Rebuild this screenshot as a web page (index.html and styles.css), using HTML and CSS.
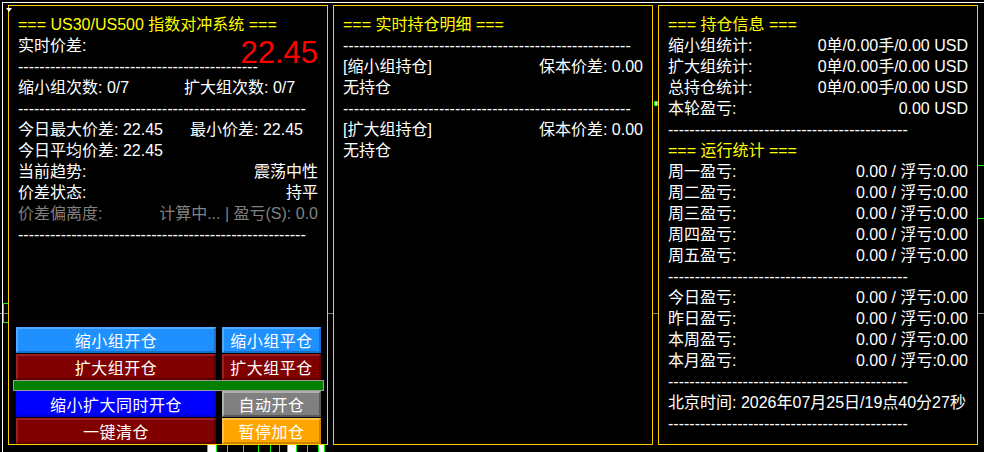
FILE: index.html
```html
<!DOCTYPE html>
<html lang="zh">
<head>
<meta charset="utf-8">
<title>US30/US500 指数对冲系统</title>
<link rel="stylesheet" href="styles.css">
</head>
<body>
<div class="chart">
  <div class="grid-line"></div>
  <div class="mark m-left"></div>
  <div class="mark m-gap"></div>
  <div class="mark m-right1"></div>
  <div class="mark m-right2"></div>
  <div class="candle c-w" style="left:207px"></div>
  <div class="candle c-g" style="left:227px"></div>
  <div class="candle c-g" style="left:243px"></div>
  <div class="candle c-g" style="left:258px"></div>
  <div class="candle c-g" style="left:270px"></div>
  <div class="candle c-g" style="left:279px"></div>
  <div class="candle c-w" style="left:287px"></div>
  <div class="candle c-g" style="left:307px"></div>
  <div class="candle c-w small" style="left:318px"></div>
  <div class="corner-tri"></div>
  <div class="frame">
    <section class="panel">
      <div class="info">
        <div class="title">=== US30/US500 指数对冲系统 ===</div>
        <div class="row split"><span>实时价差:</span><span class="big">22.45</span></div>
        <div class="dash">---------------------------------------------</div>
        <div class="row"><span class="col-a">缩小组次数: 0/7</span><span>扩大组次数: 0/7</span></div>
        <div class="dash">------------------------------------------------------</div>
        <div class="row"><span class="col-b">今日最大价差: 22.45</span><span>最小价差: 22.45</span></div>
        <div class="row">今日平均价差: 22.45</div>
        <div class="row split"><span>当前趋势:</span><span>震荡中性</span></div>
        <div class="row split"><span>价差状态:</span><span>持平</span></div>
        <div class="row split muted"><span>价差偏离度:</span><span>计算中... | 盈亏(S): 0.0</span></div>
        <div class="dash">------------------------------------------------------</div>
      </div>
      <div class="controls">
        <div class="btn-row gap-after">
          <div class="btn w1 b-dodger">缩小组开仓</div>
          <div class="btn w2 b-dodger">缩小组平仓</div>
        </div>
        <div class="btn-row">
          <div class="btn w1 b-maroon">扩大组开仓</div>
          <div class="btn w2 b-maroon">扩大组平仓</div>
        </div>
        <div class="progress"></div>
        <div class="btn-row gap-after">
          <div class="btn w1 b-blue">缩小扩大同时开仓</div>
          <div class="btn w2 b-gray">自动开仓</div>
        </div>
        <div class="btn-row">
          <div class="btn w1 b-maroon">一键清仓</div>
          <div class="btn w2 b-orange">暂停加仓</div>
        </div>
      </div>
    </section>

    <section class="panel">
      <div class="info">
        <div class="title">=== 实时持仓明细 ===</div>
        <div class="dash">------------------------------------------------------</div>
        <div class="row split"><span>[缩小组持仓]</span><span>保本价差: 0.00</span></div>
        <div class="row">无持仓</div>
        <div class="dash">------------------------------------------------------</div>
        <div class="row split"><span>[扩大组持仓]</span><span>保本价差: 0.00</span></div>
        <div class="row">无持仓</div>
      </div>
    </section>

    <section class="panel">
      <div class="info">
        <div class="title">=== 持仓信息 ===</div>
        <div class="row split"><span>缩小组统计:</span><span>0单/0.00手/0.00 USD</span></div>
        <div class="row split"><span>扩大组统计:</span><span>0单/0.00手/0.00 USD</span></div>
        <div class="row split"><span>总持仓统计:</span><span>0单/0.00手/0.00 USD</span></div>
        <div class="row split"><span>本轮盈亏:</span><span>0.00 USD</span></div>
        <div class="dash">---------------------------------------------</div>
        <div class="title">=== 运行统计 ===</div>
        <div class="row split"><span>周一盈亏:</span><span>0.00 / 浮亏:0.00</span></div>
        <div class="row split"><span>周二盈亏:</span><span>0.00 / 浮亏:0.00</span></div>
        <div class="row split"><span>周三盈亏:</span><span>0.00 / 浮亏:0.00</span></div>
        <div class="row split"><span>周四盈亏:</span><span>0.00 / 浮亏:0.00</span></div>
        <div class="row split"><span>周五盈亏:</span><span>0.00 / 浮亏:0.00</span></div>
        <div class="dash">---------------------------------------------</div>
        <div class="row split"><span>今日盈亏:</span><span>0.00 / 浮亏:0.00</span></div>
        <div class="row split"><span>昨日盈亏:</span><span>0.00 / 浮亏:0.00</span></div>
        <div class="row split"><span>本周盈亏:</span><span>0.00 / 浮亏:0.00</span></div>
        <div class="row split"><span>本月盈亏:</span><span>0.00 / 浮亏:0.00</span></div>
        <div class="dash">---------------------------------------------</div>
        <div class="row">北京时间: 2026年07月25日/19点40分27秒</div>
        <div class="dash">---------------------------------------------</div>
      </div>
    </section>
  </div>
</div>
</body>
</html>
```

FILE: styles.css
```css
* {
  box-sizing: border-box;
  margin: 0;
  padding: 0;
}

html, body {
  background: #000;
}

body {
  width: 984px;
  height: 452px;
  overflow: hidden;
  font-family: "Liberation Sans", "Noto Sans CJK SC", sans-serif;
  font-size: 16px;
  color: #fff;
}

.chart {
  position: relative;
  height: 452px;
  padding: 2px 0 0 2px;
}

.frame {
  position: relative;
  z-index: 1;
  height: 450px;
  border-top: 1px solid #fff;
  border-left: 1px solid #fff;
  padding: 2px 0 0 5px;
  display: flex;
  gap: 5px;
}

.panel {
  width: 320px;
  height: 440px;
  border: 1px solid #ffcc00;
  background: #000;
  display: flex;
  flex-direction: column;
}

.info {
  padding: 8px 9px 0 9px;
}

.title {
  color: #ffff00;
  height: 21px;
  line-height: 21px;
  white-space: nowrap;
}

.row {
  height: 21px;
  line-height: 21px;
  display: flex;
  align-items: flex-start;
  white-space: nowrap;
}

.split {
  justify-content: space-between;
}

.col-a {
  width: 166px;
}

.col-b {
  width: 172px;
}

.muted {
  color: #808080;
}

.big {
  color: #ff0000;
  font-size: 31px;
  line-height: 35px;
  height: 35px;
}

.dash {
  height: 21px;
  line-height: 21px;
  white-space: nowrap;
  overflow: hidden;
}

/* buttons */
.controls {
  margin-top: auto;
  padding: 0 6px 0 7px;
  display: flex;
  flex-direction: column;
}

.btn-row {
  display: flex;
  gap: 6px;
  height: 26px;
}

.gap-after {
  margin-bottom: 1px;
}

.btn {
  height: 26px;
  border: 2px solid;
  color: #fff;
  display: flex;
  align-items: center;
  justify-content: center;
  font-family: "Noto Sans CJK SC", sans-serif;
  font-size: 16px;
  line-height: 1;
  letter-spacing: 0.5px;
}

.w1 { width: 200px; }
.w2 { width: 99px; }

.b-dodger {
  background: #1e90ff;
  border-color: #52aaff #1670cc #1670cc #52aaff;
}

.b-maroon {
  background: #800000;
  border-color: #9c2020 #5c0000 #5c0000 #9c2020;
}

.b-blue {
  background: #0000ff;
  border-color: #0000ff #0000d0 #0000d0 #0000ff;
}

.b-gray {
  background: #808080;
  border-color: #b0b0b0 #5a5a5a #5a5a5a #b0b0b0;
}

.b-orange {
  background: #ffa500;
  border-color: #ffc04a #cc8400 #cc8400 #ffc04a;
}

.progress {
  height: 11px;
  margin: 0 -3px;
  background: #008000;
  border: 1px solid #9a9a9a;
}

/* chart background bits (free canvas) */
.grid-line {
  position: absolute;
  left: 0;
  top: 313px;
  width: 984px;
  height: 1px;
  background: #7a7a8a;
}

.mark {
  position: absolute;
  border: 1px solid #00ff00;
}

.m-left {
  left: 3px;
  top: 303px;
  width: 6px;
  height: 20px;
  border-right: none;
}

.m-gap {
  left: 654px;
  top: 101px;
  width: 4px;
  height: 5px;
  background: #fff;
}

.m-right1 {
  left: 977px;
  top: 165px;
  width: 8px;
  height: 9px;
  border-right: none;
  border-bottom: none;
}

.m-right2 {
  left: 977px;
  top: 218px;
  width: 8px;
  height: 12px;
  border-right: none;
  border-bottom: none;
}

.candle {
  position: absolute;
  top: 444px;
  height: 10px;
}

.c-w {
  width: 10px;
  background: #fff;
  border: 1px solid #00ff00;
}

.c-w.small {
  width: 7px;
}

.c-g {
  width: 1px;
  background: #00ff00;
}

.corner-tri {
  position: absolute;
  z-index: 2;
  left: 6px;
  top: 8px;
  width: 0;
  height: 0;
  border-left: 3px solid transparent;
  border-right: 3px solid transparent;
  border-top: 4px solid #fff;
}
```
